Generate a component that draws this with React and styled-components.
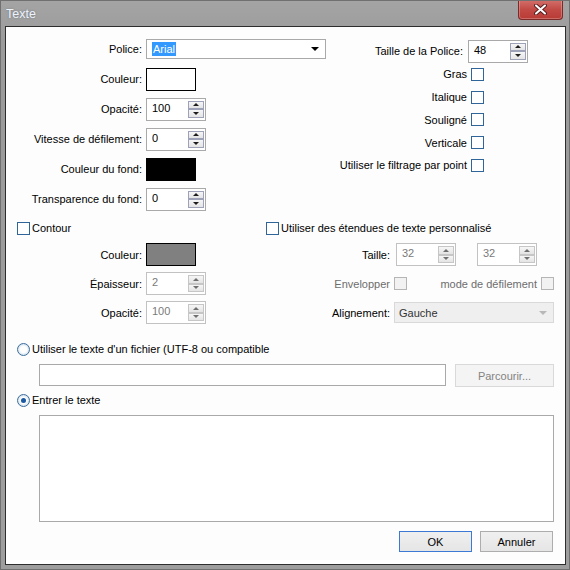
import React from "react";
import styled, { createGlobalStyle } from "styled-components";

const GlobalStyle = createGlobalStyle`
  html, body {
    margin: 0;
    padding: 0;
    background: #ffffff;
  }
  body {
    font-family: "Liberation Sans", Arial, sans-serif;
    font-size: 11px;
    color: #000;
  }
  * {
    box-sizing: border-box;
  }
`;

function App() {
  return (
    <>
      <GlobalStyle />
      <Window>
        <TitleBar>
          <Title>Texte</Title>
          <CloseButton aria-label="Fermer">
            <svg width="13" height="11" viewBox="0 0 13 11">
              <path d="M2 1.5 L11 9.5 M11 1.5 L2 9.5" stroke="#5b1f1f" strokeWidth="4" strokeLinecap="round" />
              <path d="M2 1.5 L11 9.5 M11 1.5 L2 9.5" stroke="#ffffff" strokeWidth="2" strokeLinecap="round" />
            </svg>
          </CloseButton>
        </TitleBar>

        <Client>
          <TopSection>
            <FieldGrid $rows="repeat(6, 30px)">
              <Label>Police:</Label>
              <Select $width={180}>
                <Selected>Arial</Selected>
                <Arrow />
              </Select>

              <Label>Couleur:</Label>
              <Swatch $color="#ffffff" />

              <Label>Opacité:</Label>
              <Spin value="100" />

              <Label>Vitesse de défilement:</Label>
              <Spin value="0" />

              <Label>Couleur du fond:</Label>
              <Swatch $color="#000000" />

              <Label>Transparence du fond:</Label>
              <Spin value="0" />
            </FieldGrid>

            <StyleGrid>
              <Label $pad={4}>Taille de la Police:</Label>
              <Spin value="48" />

              <Label>Gras</Label>
              <Box $offset={3} />
              <Label>Italique</Label>
              <Box $offset={3} />
              <Label>Souligné</Label>
              <Box $offset={3} />
              <Label>Verticale</Label>
              <Box $offset={3} />
              <Label>Utiliser le filtrage par point</Label>
              <Box $offset={3} />
            </StyleGrid>
          </TopSection>

          <MiddleSection>
            <LeftPart>
              <CheckRow $indent={11}>
                <Box />
                <span>Contour</span>
              </CheckRow>
              <FieldGrid $rows="repeat(3, 29px)" $top={4}>
                <Label>Couleur:</Label>
                <Swatch $color="#808080" />
                <Label>Épaisseur:</Label>
                <Spin value="2" disabled />
                <Label>Opacité:</Label>
                <Spin value="100" disabled />
              </FieldGrid>
            </LeftPart>

            <RightPart>
              <CheckRow>
                <Box />
                <span>Utiliser des étendues de texte personnalisé</span>
              </CheckRow>
              <ExtentGrid>
                <Label>Taille:</Label>
                <SpinPair>
                  <Spin value="32" disabled />
                  <Spin value="32" disabled />
                </SpinPair>

                <Label $disabled>Envelopper</Label>
                <OptionRow>
                  <Box disabled />
                  <Label $disabled $grow $pad={4}>mode de défilement</Label>
                  <Box disabled />
                </OptionRow>

                <Label>Alignement:</Label>
                <Select $disabled>
                  <span>Gauche</span>
                  <Arrow $disabled />
                </Select>
              </ExtentGrid>
            </RightPart>
          </MiddleSection>

          <RadioRow $top={14}>
            <Radio />
            <span>Utiliser le texte d'un fichier (UTF-8 ou compatible</span>
          </RadioRow>

          <FileRow>
            <FileInput type="text" defaultValue="" />
            <Button disabled>Parcourir...</Button>
          </FileRow>

          <RadioRow $top={5}>
            <Radio $checked />
            <span>Entrer le texte</span>
          </RadioRow>

          <TextArea defaultValue="" />

          <Footer>
            <Button $default>OK</Button>
            <Button>Annuler</Button>
          </Footer>
        </Client>
      </Window>
    </>
  );
}

function Spin({ value, disabled }) {
  return (
    <SpinBox $disabled={disabled}>
      <SpinValue $disabled={disabled}>{value}</SpinValue>
      <SpinButtons>
        <SpinButton $disabled={disabled}>
          <Tri $up $disabled={disabled} />
        </SpinButton>
        <SpinButton $disabled={disabled}>
          <Tri $disabled={disabled} />
        </SpinButton>
      </SpinButtons>
    </SpinBox>
  );
}

const Window = styled.div`
  width: 570px;
  height: 570px;
  display: flex;
  flex-direction: column;
  background: linear-gradient(#a4a4a4, #9b9b9b 40px, #9d9d9d);
  border: 1px solid #707070;
  overflow: hidden;
`;

const TitleBar = styled.div`
  height: 25px;
  flex-shrink: 0;
  display: flex;
  align-items: flex-start;
  justify-content: space-between;
`;

const Title = styled.span`
  margin: 6px 0 0 5px;
  font-size: 12.5px;
  color: #edf3fb;
  text-shadow: 0 0 2px rgba(70, 80, 100, 0.5);
`;

const CloseButton = styled.button`
  width: 45px;
  height: 20px;
  margin: -1px 6px 0 0;
  padding: 0;
  border: 1px solid #7b2a28;
  border-top: none;
  border-radius: 0 0 4px 4px;
  background: linear-gradient(#d3706b, #c24a45 50%, #b93a35);
  box-shadow: inset 0 0 0 1px rgba(255, 255, 255, 0.25);
  display: flex;
  align-items: center;
  justify-content: center;
`;

const Client = styled.div`
  flex: 1;
  margin: 0 3px 4px 4px;
  border: 1px solid #2d2d2d;
  background: #fdfdfd;
  display: flex;
  flex-direction: column;
`;

const TopSection = styled.div`
  display: flex;
  align-items: flex-start;
  padding-top: 7px;
`;

const Label = styled.span`
  white-space: nowrap;
  text-align: right;
  padding-right: ${({ $pad }) => $pad || 0}px;
  color: ${({ $disabled }) => ($disabled ? "#6d6d6d" : "#000")};
  flex: ${({ $grow }) => ($grow ? 1 : "none")};
`;

const FieldGrid = styled.div`
  display: grid;
  grid-template-columns: 136px auto;
  grid-template-rows: ${({ $rows }) => $rows};
  column-gap: 4px;
  align-items: center;
  justify-items: start;
  margin-top: ${({ $top }) => $top || 0}px;

  & > ${Label} {
    justify-self: end;
  }
`;

const StyleGrid = styled.div`
  display: grid;
  grid-template-columns: auto 60px;
  grid-template-rows: 24px repeat(5, 22.75px);
  column-gap: 1px;
  align-items: center;
  justify-items: start;
  margin: 5px 37px 0 auto;

  & > ${Label} {
    justify-self: end;
  }
`;

const MiddleSection = styled.div`
  display: flex;
  margin-top: 6px;
`;

const LeftPart = styled.div`
  width: 260px;
  display: flex;
  flex-direction: column;
`;

const RightPart = styled.div`
  flex: 1;
  padding-right: 11px;
  display: flex;
  flex-direction: column;
`;

const ExtentGrid = styled.div`
  display: grid;
  grid-template-columns: 124px 1fr;
  grid-template-rows: repeat(3, 29px);
  column-gap: 4px;
  align-items: center;
  margin-top: 4px;

  & > ${Label} {
    justify-self: end;
  }
`;

const SpinPair = styled.div`
  display: flex;
  align-items: center;
  gap: 21px;
  padding-left: 2px;
`;

const OptionRow = styled.div`
  display: flex;
  align-items: center;
`;

const CheckRow = styled.div`
  height: 16px;
  display: flex;
  align-items: center;
  gap: 2px;
  padding-left: ${({ $indent }) => $indent || 0}px;
`;

const Box = styled.span`
  display: inline-block;
  width: 13px;
  height: 13px;
  margin-left: ${({ $offset }) => $offset || 0}px;
  border: 1px solid ${({ disabled }) => (disabled ? "#b5b5b5" : "#2f6598")};
  background: ${({ disabled }) => (disabled ? "#f2f2f2" : "#ffffff")};
  flex-shrink: 0;
`;

const Swatch = styled.span`
  display: block;
  width: 50px;
  height: 23px;
  border: 1px solid #000;
  background: ${({ $color }) => $color};
`;

const Select = styled.div`
  width: ${({ $width }) => ($width ? `${$width}px` : "100%")};
  height: ${({ $width }) => ($width ? 20 : 21)}px;
  display: flex;
  align-items: center;
  justify-content: space-between;
  padding: 0 4px;
  border: 1px solid ${({ $disabled }) => ($disabled ? "#d9d9d9" : "#a9a9a9")};
  background: ${({ $disabled }) => ($disabled ? "#efefef" : "#ffffff")};
  color: ${({ $disabled }) => ($disabled ? "#333" : "#000")};
`;

const Selected = styled.span`
  background: #3399ff;
  color: #fff;
  padding: 1px 1px;
  margin-left: 1px;
`;

const Arrow = styled.span`
  width: 0;
  height: 0;
  margin-right: 2px;
  border-left: 4px solid transparent;
  border-right: 4px solid transparent;
  border-top: 4px solid ${({ $disabled }) => ($disabled ? "#b8b8b8" : "#000")};
`;

const SpinBox = styled.div`
  width: 60px;
  height: 23px;
  display: flex;
  align-items: stretch;
  border: 1px solid ${({ $disabled }) => ($disabled ? "#c2c2c2" : "#a9a9a9")};
  background: #fff;
  padding: 2px 1px 2px 0;
`;

const SpinValue = styled.span`
  flex: 1;
  padding: 1px 0 0 5px;
  color: ${({ $disabled }) => ($disabled ? "#7a7a7a" : "#000")};
`;

const SpinButtons = styled.div`
  width: 16px;
  display: flex;
  flex-direction: column;
  justify-content: space-between;
`;

const SpinButton = styled.span`
  height: 9px;
  display: flex;
  align-items: center;
  justify-content: center;
  border: 1px solid ${({ $disabled }) => ($disabled ? "#c6c6c6" : "#9ea2b8")};
  background: linear-gradient(#f6f6f6, #e4e4e4);
`;

const Tri = styled.span`
  width: 0;
  height: 0;
  border-left: 3px solid transparent;
  border-right: 3px solid transparent;
  ${({ $up, $disabled }) =>
    $up
      ? `border-bottom: 3px solid ${$disabled ? "#6f6f6f" : "#1d1d1d"};`
      : `border-top: 3px solid ${$disabled ? "#6f6f6f" : "#1d1d1d"};`}
`;

const RadioRow = styled.div`
  height: 16px;
  display: flex;
  align-items: center;
  gap: 2px;
  margin-top: ${({ $top }) => $top}px;
  padding-left: 11px;
  white-space: nowrap;
`;

const Radio = styled.span`
  width: 13px;
  height: 13px;
  border-radius: 50%;
  border: 1px solid #3d6e9c;
  background: radial-gradient(circle, #ffffff 40%, #d8e4ee 70%);
  display: flex;
  align-items: center;
  justify-content: center;
  flex-shrink: 0;

  &::after {
    content: "";
    width: 5px;
    height: 5px;
    border-radius: 50%;
    background: ${({ $checked }) => ($checked ? "#1b5aa3" : "transparent")};
  }
`;

const FileRow = styled.div`
  display: flex;
  align-items: flex-start;
  gap: 9px;
  margin-top: 7px;
  padding: 0 11px 0 33px;
`;

const FileInput = styled.input`
  flex: 1;
  height: 22px;
  border: 1px solid #a9a9a9;
  background: #fff;
  outline: none;
  font: inherit;
`;

const Button = styled.button`
  width: ${({ disabled }) => (disabled ? 99 : 73)}px;
  height: ${({ disabled }) => (disabled ? 23 : 21)}px;
  padding: 0;
  font-family: "Liberation Sans", Arial, sans-serif;
  font-size: 11px;
  color: ${({ disabled }) => (disabled ? "#838383" : "#000")};
  border: 1px solid
    ${({ $default, disabled }) => ($default ? "#3b79d4" : disabled ? "#d9d9d9" : "#adadad")};
  background: ${({ disabled }) =>
    disabled ? "#f4f4f4" : "linear-gradient(#f0f0f0, #e5e5e5)"};
`;

const TextArea = styled.textarea`
  height: 107px;
  margin: 7px 11px 0 33px;
  border: 1px solid #a9a9a9;
  background: #fff;
  resize: none;
  outline: none;
  font: inherit;
`;

const Footer = styled.div`
  display: flex;
  justify-content: flex-end;
  gap: 8px;
  margin-top: 9px;
  padding-right: 12px;
`;

export default App;
